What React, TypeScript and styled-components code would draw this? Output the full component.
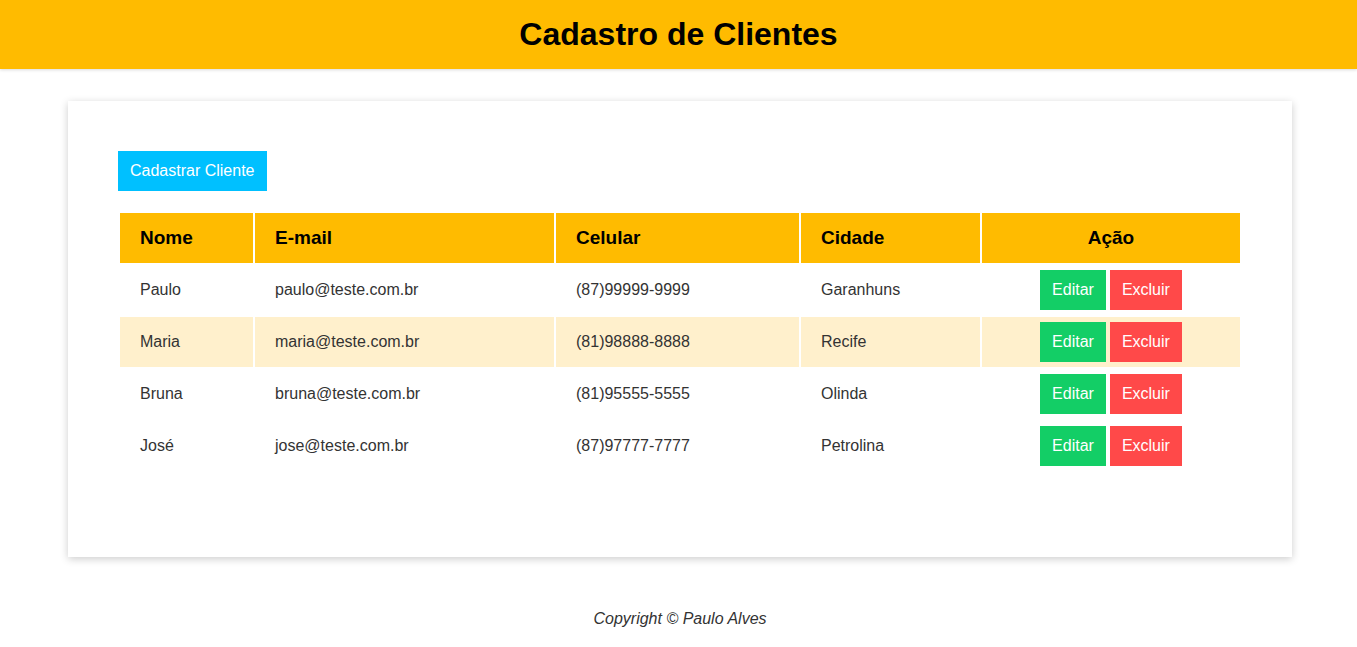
import React from "react";
import styled, { createGlobalStyle } from "styled-components";

const GlobalStyle = createGlobalStyle`
  html, body { margin: 0; padding: 0; background: #fff; }
  body { font-family: "Liberation Sans", Arial, sans-serif; color: #333; }
  * { box-sizing: border-box; }
`;

const Header = styled.header`
  height: 69px;
  background: #ffbb00;
  display: flex;
  align-items: center;
  justify-content: center;
  box-shadow: 0 1px 3px rgba(0, 0, 0, 0.15);
`;

const Title = styled.h1`
  margin: 0;
  font-size: 32px;
  font-weight: bold;
  color: #000;
`;

const Main = styled.main`
  padding: 32px 65px 0 68px;
`;

const Card = styled.section`
  width: 1224px;
  height: 456px;
  background: #fff;
  padding: 50px;
  box-shadow: 0 2px 8px rgba(0, 0, 0, 0.2);
`;

const Button = styled.button<{ $bg: string }>`
  height: 40px;
  padding: 0 12px;
  border: none;
  border-radius: 0;
  background: ${(p) => p.$bg};
  color: #fff;
  font-family: "Liberation Sans", Arial, sans-serif;
  font-size: 16px;
  cursor: pointer;
`;

const Table = styled.table`
  margin-top: 20px;
  width: 1124px;
  border-spacing: 2px;
  table-layout: fixed;
`;

const Th = styled.th<{ $w: number; $center?: boolean }>`
  width: ${(p) => p.$w}px;
  height: 50px;
  padding: 0 20px;
  background: #ffbb00;
  color: #000;
  font-size: 19px;
  font-weight: bold;
  text-align: ${(p) => (p.$center ? "center" : "left")};
`;

const Tr = styled.tr<{ $highlight: boolean }>`
  background: ${(p) => (p.$highlight ? "#fff0cc" : "transparent")};
`;

const Td = styled.td<{ $center?: boolean }>`
  height: 50px;
  padding: 0 20px;
  font-size: 16px;
  color: #333;
  text-align: ${(p) => (p.$center ? "center" : "left")};
`;

const Actions = styled.div`
  display: flex;
  justify-content: center;
  gap: 4px;
`;

const Footer = styled.footer`
  margin-top: 53px;
  text-align: center;
  font-style: italic;
  font-size: 16px;
  color: #333;
`;

const clients = [
  { nome: "Paulo", email: "paulo@teste.com.br", celular: "(87)99999-9999", cidade: "Garanhuns" },
  { nome: "Maria", email: "maria@teste.com.br", celular: "(81)98888-8888", cidade: "Recife" },
  { nome: "Bruna", email: "bruna@teste.com.br", celular: "(81)95555-5555", cidade: "Olinda" },
  { nome: "José", email: "jose@teste.com.br", celular: "(87)97777-7777", cidade: "Petrolina" },
];

export default function App() {
  return (
    <>
      <GlobalStyle />
      <Header>
        <Title>Cadastro de Clientes</Title>
      </Header>
      <Main>
        <Card>
          <Button $bg="#00c0ff">Cadastrar Cliente</Button>
          <Table>
            <thead>
              <tr>
                <Th $w={133}>Nome</Th>
                <Th $w={299}>E-mail</Th>
                <Th $w={243}>Celular</Th>
                <Th $w={179}>Cidade</Th>
                <Th $w={258} $center>Ação</Th>
              </tr>
            </thead>
            <tbody>
              {clients.map((c, i) => (
                <Tr key={c.email} $highlight={i === 1}>
                  <Td>{c.nome}</Td>
                  <Td>{c.email}</Td>
                  <Td>{c.celular}</Td>
                  <Td>{c.cidade}</Td>
                  <Td $center>
                    <Actions>
                      <Button $bg="#13ce66">Editar</Button>
                      <Button $bg="#ff4949">Excluir</Button>
                    </Actions>
                  </Td>
                </Tr>
              ))}
            </tbody>
          </Table>
        </Card>
        <Footer>Copyright © Paulo Alves</Footer>
      </Main>
    </>
  );
}
